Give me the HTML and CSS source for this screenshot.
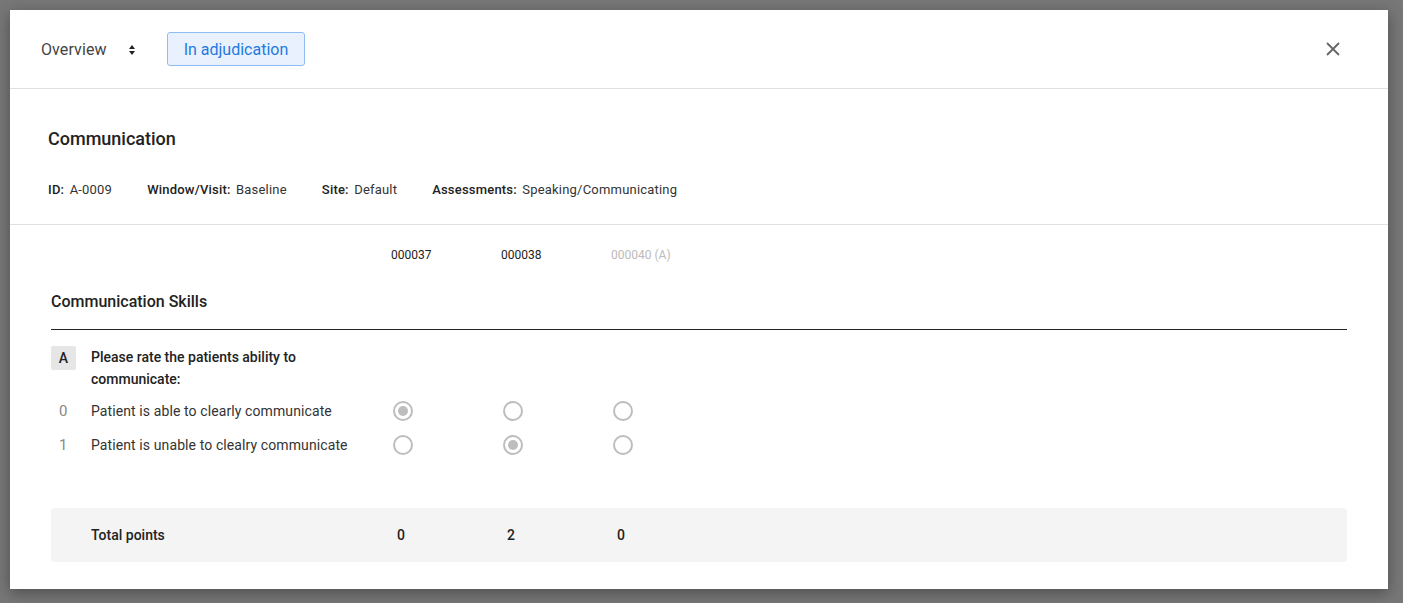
FILE: index.html
```html
<!DOCTYPE html>
<html lang="en">
<head>
    <meta charset="UTF-8">
    <title>Communication - Overview</title>
    <link rel="stylesheet" href="styles.css">
</head>
<body>
    <div class="modal">
        <div class="modal-header">
            <div class="view-select">
                <span>Overview</span>
                <svg class="sort-icon" width="6" height="10" viewBox="0 0 6 10">
                    <path d="M3 0 L6 4 L0 4 Z M3 10 L6 6 L0 6 Z" fill="#222"/>
                </svg>
            </div>
            <span class="status-badge">In adjudication</span>
            <button class="close-btn" aria-label="Close">
                <svg width="14" height="14" viewBox="0 0 14 14">
                    <path d="M1 1 L13 13 M13 1 L1 13" stroke="#666" stroke-width="1.8" fill="none"/>
                </svg>
            </button>
        </div>

        <div class="summary">
            <h2>Communication</h2>
            <div class="meta">
                <span><b>ID:</b> A-0009</span>
                <span><b>Window/Visit:</b> Baseline</span>
                <span><b>Site:</b> Default</span>
                <span><b>Assessments:</b> Speaking/Communicating</span>
            </div>
        </div>

        <div class="scores">
            <div class="grid col-heads">
                <span></span>
                <span></span>
                <span>000037</span>
                <span>000038</span>
                <span class="muted">000040 (A)</span>
            </div>

            <h3 class="group-title">Communication Skills</h3>

            <div class="grid question">
                <span class="q-badge">A</span>
                <span class="q-text">Please rate the patients ability to communicate:</span>
            </div>

            <div class="grid option">
                <span class="opt-num">0</span>
                <span>Patient is able to clearly communicate</span>
                <span class="radio checked"></span>
                <span class="radio"></span>
                <span class="radio"></span>
            </div>
            <div class="grid option">
                <span class="opt-num">1</span>
                <span>Patient is unable to clealry communicate</span>
                <span class="radio"></span>
                <span class="radio checked"></span>
                <span class="radio"></span>
            </div>

            <div class="grid total">
                <span></span>
                <span>Total points</span>
                <span class="total-val">0</span>
                <span class="total-val">2</span>
                <span class="total-val">0</span>
            </div>
        </div>
    </div>
</body>
</html>
```

FILE: styles.css
```css
* {
    box-sizing: border-box;
    margin: 0;
    padding: 0;
}
body {
    font-family: Roboto, 'Liberation Sans', sans-serif;
    background: #777;
    color: #222;
    height: 603px;
    overflow: hidden;
    padding: 10px 15px 0 10px;
}
.modal {
    background: #fff;
    height: 579px;
    box-shadow: 0 4px 14px rgba(0, 0, 0, 0.35);
}
.modal-header {
    display: flex;
    align-items: center;
    height: 79px;
    padding: 0 45px 0 31px;
    border-bottom: 1px solid #e0e0e0;
}
.view-select {
    display: flex;
    align-items: center;
    gap: 22px;
    font-size: 16px;
    letter-spacing: 0.1px;
    color: #444;
    margin-right: 32px;
}
.sort-icon {
    margin-top: 1px;
}
.status-badge {
    display: inline-block;
    height: 34px;
    line-height: 33px;
    padding: 0 16px;
    font-size: 16px;
    color: #1f7ae0;
    background: #e8f1fd;
    border: 1px solid #8fbdf3;
    border-radius: 3px;
}
.close-btn {
    margin-left: auto;
    background: none;
    border: none;
    width: 20px;
    height: 20px;
    display: flex;
    align-items: center;
    justify-content: center;
    cursor: pointer;
}
.summary {
    padding: 39px 38px 0;
    height: 136px;
    border-bottom: 1px solid #e0e0e0;
}
.summary h2 {
    font-size: 18px;
    font-weight: 500;
    line-height: 21px;
    color: #222;
}
.meta {
    display: flex;
    gap: 35px;
    margin-top: 33px;
    font-size: 13px;
    letter-spacing: 0.2px;
    color: #333;
}
.meta b {
    font-weight: 500;
    color: #222;
    margin-right: 2px;
}
.scores {
    padding: 0 41px;
}
.grid {
    display: grid;
    grid-template-columns: 40px 300px 110px 110px 110px 1fr;
    align-items: center;
}
.col-heads {
    height: 60px;
    font-size: 12px;
    color: #222;
    padding-bottom: 1px;
}
.col-heads .muted {
    color: #bbb;
}
.group-title {
    font-size: 16px;
    font-weight: 500;
    line-height: 19px;
    padding: 7px 0 18px;
    border-bottom: 1px solid #222;
}
.question {
    align-items: start;
    margin-top: 16px;
    margin-bottom: 4px;
    font-size: 14px;
}
.q-badge {
    width: 25px;
    height: 24px;
    line-height: 24px;
    text-align: center;
    background: #e6e6e6;
    border-radius: 2px;
    font-weight: 500;
    color: #222;
}
.q-text {
    max-width: 262px;
    font-weight: 500;
    line-height: 22px;
    color: #222;
}
.option {
    height: 34px;
    font-size: 14px;
    letter-spacing: 0.1px;
    color: #333;
}
.opt-num {
    color: #888;
    font-size: 15px;
    padding-left: 8px;
}
.radio {
    width: 20px;
    height: 20px;
    margin-left: 2px;
    border: 2px solid #bdbdbd;
    border-radius: 50%;
    position: relative;
}
.radio.checked::after {
    content: '';
    position: absolute;
    left: 3px;
    top: 3px;
    width: 10px;
    height: 10px;
    border-radius: 50%;
    background: #bdbdbd;
}
.total {
    margin-top: 46px;
    height: 54px;
    background: #f4f4f4;
    border-radius: 4px;
    font-size: 14px;
    font-weight: 500;
    color: #222;
}
.total-val {
    padding-left: 6px;
}
```
